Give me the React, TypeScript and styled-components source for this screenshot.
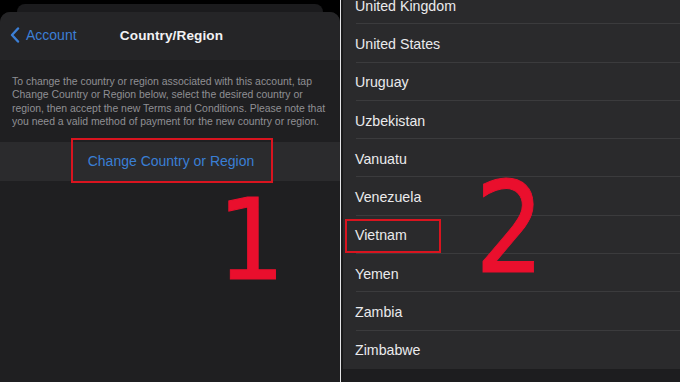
import React from "react";
import styled, { createGlobalStyle } from "styled-components";

const GlobalStyle = createGlobalStyle`
  html, body { margin: 0; padding: 0; background: #000; }
  body { font-family: "Liberation Sans", Arial, sans-serif; -webkit-font-smoothing: antialiased; }
  #root { width: 680px; height: 382px; }
`;

const Page = styled.div`
  width: 680px;
  height: 382px;
  display: flex;
  overflow: hidden;
  background: #000;
`;

const LeftPane = styled.div`
  position: relative;
  width: 340px;
  flex: none;
  display: flex;
  flex-direction: column;
  padding-top: 4px;
  box-sizing: border-box;
  background: #000;
`;

const BackSheet = styled.div`
  height: 8px;
  margin: 0 17px;
  flex: none;
  border-radius: 10px 10px 0 0;
  background: #1b1b1d;
`;

const Sheet = styled.div`
  flex: 1;
  display: flex;
  flex-direction: column;
  border-radius: 10px 10px 0 0;
  background: #1f1f21;
`;

const NavBar = styled.div`
  height: 48px;
  flex: none;
  display: grid;
  grid-template-columns: 1fr auto 1fr;
  align-items: center;
  padding: 0 10px 2px 10px;
  box-sizing: border-box;
  background: #252527;
  border-radius: 10px 10px 0 0;
`;

const BackButton = styled.div`
  display: flex;
  align-items: center;
  gap: 6px;
  color: #3c7fd6;
  font-size: 14px;
`;

const Title = styled.div`
  color: #f2f2f4;
  font-size: 13.6px;
  font-weight: 700;
  letter-spacing: 0.1px;
  padding-left: 3px;
`;

const Explanation = styled.p`
  margin: 0;
  padding: 15px 12px 13px 12px;
  color: #8f8f94;
  font-size: 10.45px;
  line-height: 13.4px;
`;

const ActionRow = styled.div`
  position: relative;
  height: 39px;
  flex: none;
  display: flex;
  align-items: center;
  justify-content: center;
  background: #2b2b2d;
  color: #3a7fd5;
  font-size: 14px;
  padding-left: 2px;
`;

const Highlight = styled.div<{ $left: number; $top: number; $w: number; $h: number }>`
  position: absolute;
  left: ${(p) => p.$left}px;
  top: ${(p) => p.$top}px;
  width: ${(p) => p.$w}px;
  height: ${(p) => p.$h}px;
  box-sizing: border-box;
  border: 2.5px solid #d9141f;
  pointer-events: none;
`;

const StepNumber = styled.div<{ $left: number; $top: number; $size: number; $sx: number }>`
  position: absolute;
  left: ${(p) => p.$left}px;
  top: ${(p) => p.$top}px;
  font-family: "DejaVu Sans", sans-serif;
  font-size: ${(p) => p.$size}px;
  line-height: 1;
  color: #ea0f2d;
  -webkit-text-stroke: 1px #ea0f2d;
  transform: scaleX(${(p) => p.$sx});
  transform-origin: left top;
  pointer-events: none;
`;

const Divider = styled.div`
  width: 1px;
  flex: none;
  background: #e4e4e6;
`;

const RightPane = styled.div`
  position: relative;
  flex: 1;
  display: flex;
  flex-direction: column;
  background: #1d1d1f;
  border-left: 2px solid #19191a;
`;

const List = styled.div`
  margin-top: -14px;
  background: #2a2a2c;
  flex: none;
`;

const Row = styled.div<{ $last?: boolean }>`
  position: relative;
  height: 38.3px;
  box-sizing: border-box;
  display: flex;
  align-items: center;
  padding-left: 12px;
  padding-top: 1px;
  color: #ebebed;
  font-size: 14.2px;
  &::after {
    content: "";
    position: absolute;
    left: 13px;
    right: 0;
    bottom: 0;
    height: 1px;
    background: ${(p) => (p.$last ? "transparent" : "#3b3b3d")};
  }
`;

const countries = [
  "United Kingdom",
  "United States",
  "Uruguay",
  "Uzbekistan",
  "Vanuatu",
  "Venezuela",
  "Vietnam",
  "Yemen",
  "Zambia",
  "Zimbabwe",
];

const Chevron = () => (
  <svg width="10" height="16" viewBox="0 0 10 16" fill="none">
    <path d="M8 1.5 L2 8 L8 14.5" stroke="#3c7fd6" strokeWidth="2.4" strokeLinecap="round" strokeLinejoin="round" />
  </svg>
);

export default function App() {
  return (
    <>
      <GlobalStyle />
      <Page>
        <LeftPane>
          <BackSheet />
          <Sheet>
            <NavBar>
              <BackButton>
                <Chevron />
                <span>Account</span>
              </BackButton>
              <Title>Country/Region</Title>
              <span />
            </NavBar>
            <Explanation>
              To change the country or region associated with this account, tap Change Country or Region
              below, select the desired country or region, then accept the new Terms and Conditions. Please
              note that you need a valid method of payment for the new country or region.
            </Explanation>
            <ActionRow>
              Change Country or Region
              <Highlight $left={71} $top={-4} $w={202} $h={45} />
            </ActionRow>
          </Sheet>
          <StepNumber $left={217} $top={184} $size={112} $sx={0.96}>1</StepNumber>
        </LeftPane>
        <Divider />
        <RightPane>
          <List>
            {countries.map((c, i) => (
              <Row key={c} $last={i === countries.length - 1}>
                {c}
                {c === "Vietnam" && <Highlight $left={2} $top={3} $w={96} $h={34} />}
              </Row>
            ))}
          </List>
          <StepNumber $left={132} $top={165} $size={127} $sx={0.86}>2</StepNumber>
        </RightPane>
      </Page>
    </>
  );
}
